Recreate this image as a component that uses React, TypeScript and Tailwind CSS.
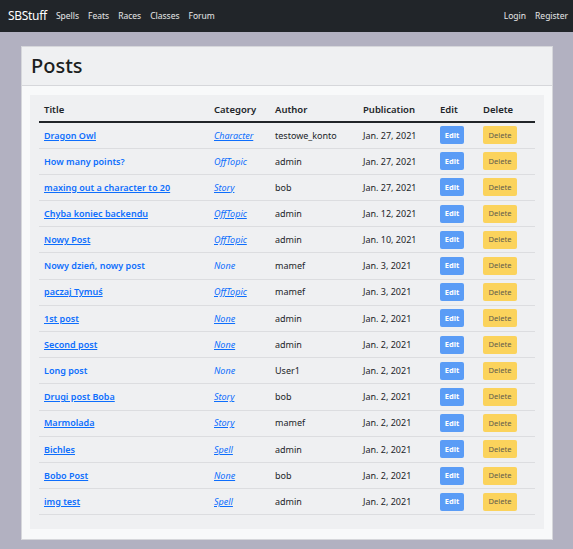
import React from 'react';

type Post = { title: string; cat: string; author: string; date: string; plain?: boolean };

const posts: Post[] = [
  { title: 'Dragon Owl', cat: 'Character', author: 'testowe_konto', date: 'Jan. 27, 2021' },
  { title: 'How many points?', cat: 'OffTopic', author: 'admin', date: 'Jan. 27, 2021', plain: true },
  { title: 'maxing out a character to 20', cat: 'Story', author: 'bob', date: 'Jan. 27, 2021' },
  { title: 'Chyba koniec backendu', cat: 'OffTopic', author: 'admin', date: 'Jan. 12, 2021' },
  { title: 'Nowy Post', cat: 'OffTopic', author: 'admin', date: 'Jan. 10, 2021' },
  { title: 'Nowy dzień, nowy post', cat: 'None', author: 'mamef', date: 'Jan. 3, 2021', plain: true },
  { title: 'paczaj Tymuś', cat: 'OffTopic', author: 'mamef', date: 'Jan. 3, 2021' },
  { title: '1st post', cat: 'None', author: 'admin', date: 'Jan. 2, 2021' },
  { title: 'Second post', cat: 'None', author: 'admin', date: 'Jan. 2, 2021' },
  { title: 'Long post', cat: 'None', author: 'User1', date: 'Jan. 2, 2021', plain: true },
  { title: 'Drugi post Boba', cat: 'Story', author: 'bob', date: 'Jan. 2, 2021' },
  { title: 'Marmolada', cat: 'Story', author: 'mamef', date: 'Jan. 2, 2021' },
  { title: 'Bichles', cat: 'Spell', author: 'admin', date: 'Jan. 2, 2021' },
  { title: 'Bobo Post', cat: 'None', author: 'bob', date: 'Jan. 2, 2021' },
  { title: 'img test', cat: 'Spell', author: 'admin', date: 'Jan. 2, 2021' },
];

const navLinks = ['Spells', 'Feats', 'Races', 'Classes', 'Forum'];

export default function App() {
  return (
    <div className="min-h-[549px] bg-[#b2b1c1] font-['Noto_Sans',sans-serif] text-[#212529]">
      {/* top navbar */}
      <nav className="h-[32px] bg-[#212529] flex items-center pl-[8px] pr-[5px] text-white text-[8.5px]">
        <span className="text-[12px] mr-[9px] tracking-tight">SBStuff</span>
        <div className="flex gap-[9px]">
          {navLinks.map(l => (
            <a key={l} className="text-white/90">{l}</a>
          ))}
        </div>
        <div className="ml-auto flex gap-[9px]">
          <a className="text-white/90">Login</a>
          <a className="text-white/90">Register</a>
        </div>
      </nav>

      <div className="pt-[14px] pl-[21px] pr-[20px]">
        <div className="border border-[#d6d7db] bg-[#f8f9fa] w-[532px] h-[494px] flex flex-col">
          <div className="h-[39px] bg-[#eff0f2] border-b border-[#d6d7db] flex items-center px-[9px]">
            <h1 className="text-[20px] font-medium leading-none text-[#1b1e21]">Posts</h1>
          </div>

          <div className="px-[8px] pt-[9px] pb-[9px] flex-1 flex flex-col">
            <div className="bg-[#eff0f2] px-[9px] pt-[5px] pb-[14px]">
              <table className="w-full border-collapse text-[9px] table-fixed">
                <colgroup>
                  <col className="w-[170px]" />
                  <col className="w-[61px]" />
                  <col className="w-[88px]" />
                  <col className="w-[77px]" />
                  <col className="w-[43px]" />
                  <col />
                </colgroup>
                <thead>
                  <tr className="h-[22px] border-b-2 border-[#212529] text-left text-[9.5px]">
                    <th className="pl-[5px] font-semibold">Title</th>
                    <th className="pl-[5px] font-semibold">Category</th>
                    <th className="pl-[5px] font-semibold">Author</th>
                    <th className="pl-[5px] font-semibold">Publication</th>
                    <th className="pl-[5px] font-semibold">Edit</th>
                    <th className="pl-[5px] font-semibold">Delete</th>
                  </tr>
                </thead>
                <tbody>
                  {posts.map((p, i) => (
                    <tr key={i} className="h-[26.2px] border-b border-[#dcdde0]">
                      <td className="pl-[5px] whitespace-nowrap">
                        <a className={`font-semibold text-[#0d6efd] ${p.plain ? '' : 'underline'}`}>{p.title}</a>
                      </td>
                      <td className="pl-[5px]">
                        <a className={`italic text-[#0d6efd] ${p.plain ? '' : 'underline'}`}>{p.cat}</a>
                      </td>
                      <td className="pl-[5px]">{p.author}</td>
                      <td className="pl-[5px] whitespace-nowrap">{p.date}</td>
                      <td className="pl-[5px]">
                        <span className="inline-flex items-center justify-center w-[24px] h-[18px] rounded-[2px] bg-[#5a9cf6] text-white text-[7.5px] font-bold">
                          Edit
                        </span>
                      </td>
                      <td className="pl-[5px]">
                        <span className="inline-flex items-center justify-center w-[34px] h-[18px] rounded-[2px] bg-[#fbd35c] text-[#5f5a4c] text-[7.5px]">
                          Delete
                        </span>
                      </td>
                    </tr>
                  ))}
                </tbody>
              </table>
            </div>
          </div>
        </div>
      </div>
    </div>
  );
}
